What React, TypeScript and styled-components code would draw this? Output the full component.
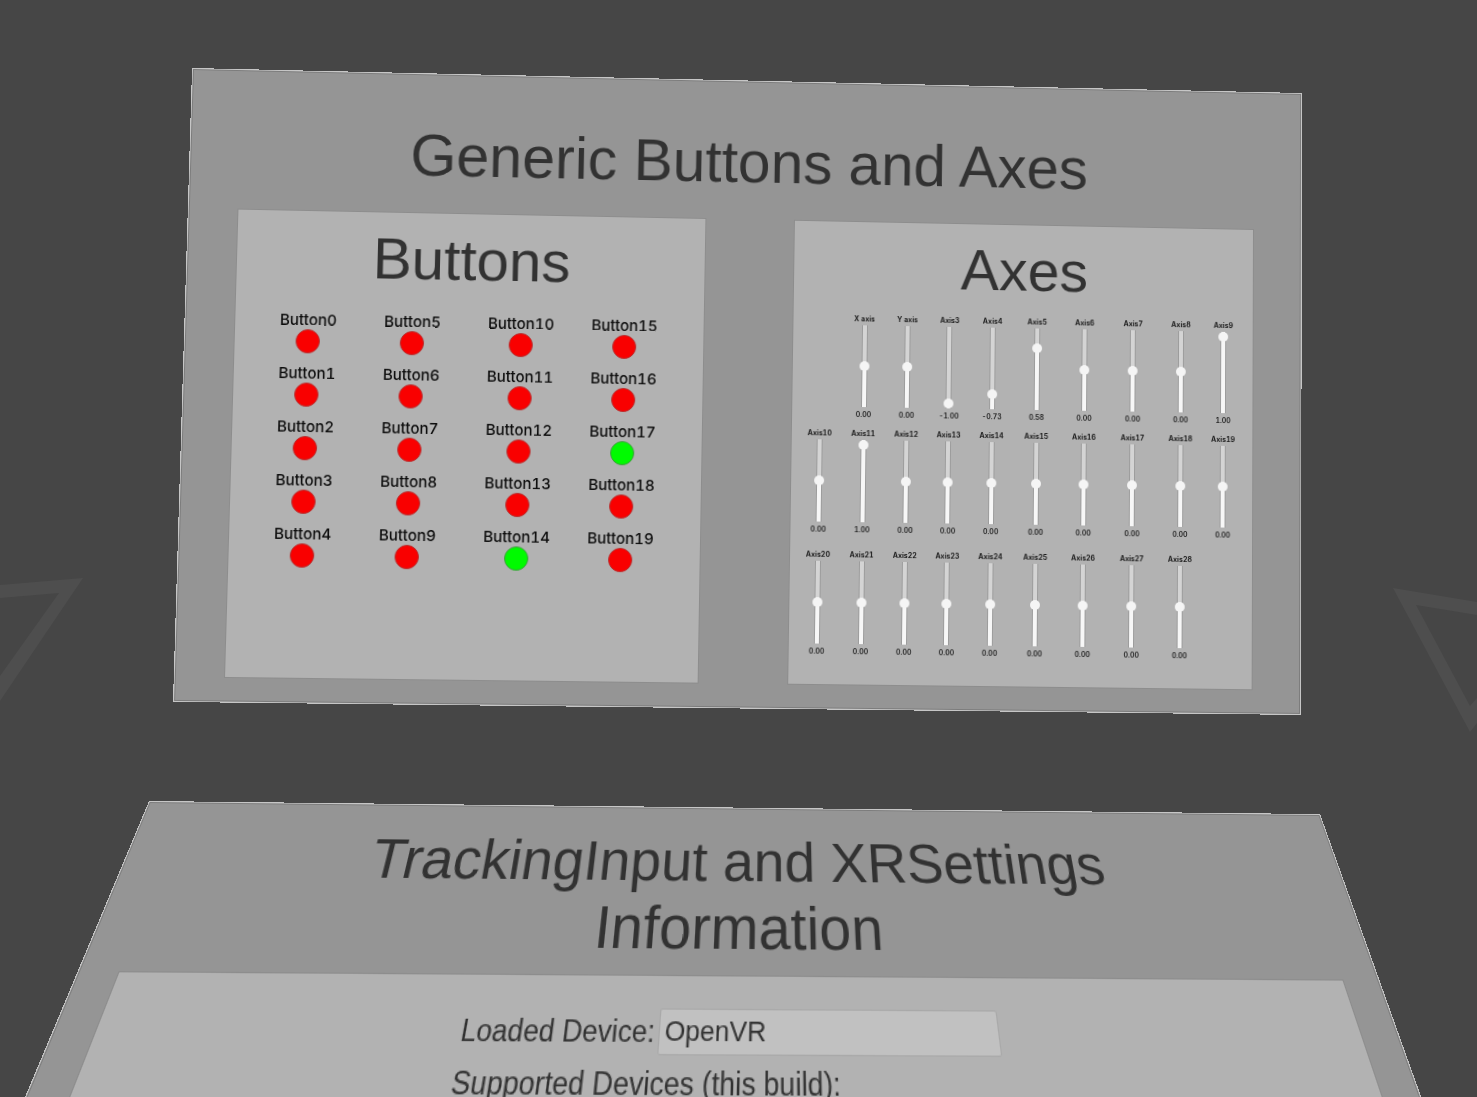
import React, { useEffect, useState } from "react";
import styled, { createGlobalStyle } from "styled-components";

type Point = [number, number];
type Quad = [Point, Point, Point, Point];

const SCENE_WIDTH = 1477;

/* Projects a flat rectangle onto four scene points (clockwise from top left). */
function project(width: number, height: number, quad: Quad, scale: number) {
  const [[x0, y0], [x1, y1], [x2, y2], [x3, y3]] = quad.map(([x, y]) => [x * scale, y * scale]);
  const dx1 = x1 - x2;
  const dx2 = x3 - x2;
  const dx3 = x0 - x1 + x2 - x3;
  const dy1 = y1 - y2;
  const dy2 = y3 - y2;
  const dy3 = y0 - y1 + y2 - y3;
  const det = dx1 * dy2 - dx2 * dy1;
  const g = (dx3 * dy2 - dx2 * dy3) / det;
  const h = (dx1 * dy3 - dx3 * dy1) / det;
  const m = [
    (x1 - x0 + g * x1) / width,
    (y1 - y0 + g * y1) / width,
    0,
    g / width,
    (x3 - x0 + h * x3) / height,
    (y3 - y0 + h * y3) / height,
    0,
    h / height,
    0,
    0,
    1,
    0,
    x0,
    y0,
    0,
    1,
  ];
  return `matrix3d(${m.map((n) => n.toFixed(9)).join(",")})`;
}

const GlobalStyle = createGlobalStyle`
  body {
    margin: 0;
    background: #464646;
    color: #323232;
    font-family: "Liberation Sans", Arial, sans-serif;
  }
  *, *::before, *::after { box-sizing: border-box; }
`;

const Scene = styled.main`
  position: relative;
  min-height: 100vh;
  overflow: hidden;
  background: #464646;
`;

const Floor = styled.svg`
  position: absolute;
  top: 0;
  left: 0;
  width: 100%;
  fill: #4e4e4e;
`;

const Board = styled.section`
  position: absolute;
  top: 0;
  left: 0;
  display: flex;
  flex-direction: column;
  width: 1120px;
  min-height: 628px;
  border: 1px solid #c6c6c6;
  background: #959595;
  box-shadow: inset 0 0 0 1px #7c7c7c;
  transform-origin: 0 0;
`;

const Title = styled.h1`
  margin: 0;
  font-weight: 400;
  text-align: center;
`;

const GenericBoard = styled(Board)`
  padding: 49px 49px 24px;
  gap: 24px;

  ${Title} {
    font-size: 59px;
    line-height: 67px;
  }
`;

const TrackingBoard = styled(Board)`
  padding: 23px 32px 34px 34px;
  gap: 10px;

  ${Title} {
    padding-right: 4px;
    font-size: 51px;
    line-height: 60px;
  }
`;

const Columns = styled.div`
  display: grid;
  grid-template-columns: 1fr 1fr;
  gap: 90px;
  flex: 1;
`;

const Panel = styled.section`
  background: #b2b2b2;
  box-shadow: 0 0 0 1px #8d8d8d;
`;

const PanelTitle = styled.h2`
  margin: 0;
  padding-top: 12px;
  font-size: 58px;
  line-height: 68px;
  font-weight: 400;
  text-align: center;
`;

const ButtonGrid = styled.div`
  display: grid;
  grid-auto-flow: column;
  grid-template-rows: repeat(5, auto);
  grid-auto-columns: 103px;
  row-gap: 11px;
  justify-items: start;
  padding: 20px 0 0 44px;
`;

const ButtonCell = styled.div`
  display: flex;
  flex-direction: column;
  align-items: center;
  color: #0c0c0c;
  font-family: Inter, "Liberation Sans", sans-serif;
  font-size: 15px;
  font-weight: 500;
  font-variant-numeric: tabular-nums;
  line-height: 18px;
`;

const Lamp = styled.span<{ $on: boolean }>`
  width: 24px;
  height: 24px;
  border: 1px solid ${(p) => (p.$on ? "#3f9f3f" : "#b83030")};
  border-radius: 50%;
  background: ${(p) => (p.$on ? "#00fb00" : "#f90000")};
`;

const AxisGrid = styled.div`
  display: grid;
  grid-template-columns: 44fr 44fr 43fr 43fr 44fr 47fr 50fr 49fr 49fr 38fr;
  grid-template-rows: 115px 121px auto;
  padding: 13px 11px 0 6px;
`;

const AxisCell = styled.div<{ $column?: number }>`
  display: flex;
  flex-direction: column;
  align-items: center;
  gap: 1px;
  grid-column-start: ${(p) => p.$column ?? "auto"};
  color: #1c1c1c;
  font-family: Inter, "Liberation Sans", sans-serif;
  font-size: 7px;
  font-weight: 700;
  font-variant-numeric: tabular-nums;
  line-height: 10px;
  white-space: nowrap;
`;

const AxisValue = styled.output`
  font-weight: 600;
  line-height: 14px;
`;

const Slider = styled.input<{ $fill: number }>`
  appearance: none;
  writing-mode: vertical-lr;
  direction: rtl;
  width: 10px;
  height: 82px;
  margin: 0;
  background:
    linear-gradient(to top, #f7f7f7 ${(p) => p.$fill}%, #d4d4d4 ${(p) => p.$fill}%) center / 4px 100% no-repeat,
    linear-gradient(#9c9c9c, #9c9c9c) center / 6px 100% no-repeat;

  &::-webkit-slider-thumb {
    appearance: none;
    width: 10px;
    height: 10px;
    border: 0;
    border-radius: 50%;
    background: #f5f5f5;
  }
`;

const Form = styled.form`
  display: grid;
  grid-template-columns: auto 285px;
  row-gap: 5px;
  column-gap: 3px;
  justify-content: center;
  align-items: center;
  padding: 26px 12px 0 0;
`;

const FieldLabel = styled.label`
  width: 160px;
  font-size: 23px;
  line-height: 33px;
  white-space: nowrap;
`;

const Field = styled.input`
  width: 100%;
  height: 36px;
  padding: 0 4px;
  border: 1px solid #a9a9a9;
  border-radius: 2px;
  background: #c1c1c1;
  color: #323232;
  font: 22px "Liberation Sans", Arial, sans-serif;
`;

const TallPanel = styled(Panel)`
  flex: 1;
`;

const PRESSED = new Set([14, 17]);
const BUTTONS = Array.from({ length: 20 }, (_, i) => i);

const AXIS_VALUES: Record<number, number> = { 3: -1, 4: -0.73, 5: 0.58, 9: 1, 11: 1 };
const AXES = Array.from({ length: 28 }, (_, i) => {
  const n = i + 1;
  const name = n === 1 ? "X axis" : n === 2 ? "Y axis" : `Axis${n}`;
  return { name, value: AXIS_VALUES[n] ?? 0 };
});

const GENERIC_QUAD: Quad = [[192, 68], [1302, 93], [1301, 715], [173, 702]];
const TRACKING_QUAD: Quad = [[149, 801], [1320, 814], [1423, 1102], [25, 1097]];

function useSceneScale() {
  const [scale, setScale] = useState(window.innerWidth / SCENE_WIDTH);
  useEffect(() => {
    const update = () => setScale(window.innerWidth / SCENE_WIDTH);
    window.addEventListener("resize", update);
    return () => window.removeEventListener("resize", update);
  }, []);
  return scale;
}

function Axis({ name, value, column }: { name: string; value: number; column?: number }) {
  const [current, setCurrent] = useState(value);
  const id = name.replace(" ", "-").toLowerCase();
  return (
    <AxisCell $column={column}>
      <label htmlFor={id}>{name}</label>
      <Slider
        id={id}
        type="range"
        min={-1}
        max={1}
        step={0.01}
        value={current}
        $fill={(current + 1) * 50}
        onChange={(e) => setCurrent(Number(e.target.value))}
      />
      <AxisValue htmlFor={id}>{current.toFixed(2)}</AxisValue>
    </AxisCell>
  );
}

export default function App() {
  const scale = useSceneScale();
  return (
    <>
      <GlobalStyle />
      <Scene>
        <Floor viewBox="0 0 1477 1097" aria-hidden="true">
          <path d="M0 585 L83 578 L0 701 V676 L59 593 L0 598 Z" />
          <path d="M1477 602 L1393 588 L1470 732 L1477 723 V698 L1470 706 L1416 605 L1477 615 Z" />
        </Floor>

        <GenericBoard style={{ transform: project(1120, 628, GENERIC_QUAD, scale) }}>
          <Title>Generic Buttons and Axes</Title>
          <Columns>
            <Panel>
              <PanelTitle>Buttons</PanelTitle>
              <ButtonGrid>
                {BUTTONS.map((n) => (
                  <ButtonCell key={n}>
                    <span>Button{n}</span>
                    <Lamp $on={PRESSED.has(n)} />
                  </ButtonCell>
                ))}
              </ButtonGrid>
            </Panel>
            <Panel>
              <PanelTitle>Axes</PanelTitle>
              <AxisGrid>
                {AXES.map((axis, i) => (
                  <Axis key={axis.name} {...axis} column={i === 0 ? 2 : undefined} />
                ))}
              </AxisGrid>
            </Panel>
          </Columns>
        </GenericBoard>

        <TrackingBoard style={{ transform: project(1120, 248, TRACKING_QUAD, scale) }}>
          <Title>
            TrackingInput and XRSettings
            <br />
            Information
          </Title>
          <TallPanel>
            <Form>
              <FieldLabel htmlFor="loaded-device">Loaded Device:</FieldLabel>
              <Field id="loaded-device" type="text" defaultValue="OpenVR" />
              <FieldLabel as="span">Supported Devices (this build):</FieldLabel>
            </Form>
          </TallPanel>
        </TrackingBoard>
      </Scene>
    </>
  );
}
